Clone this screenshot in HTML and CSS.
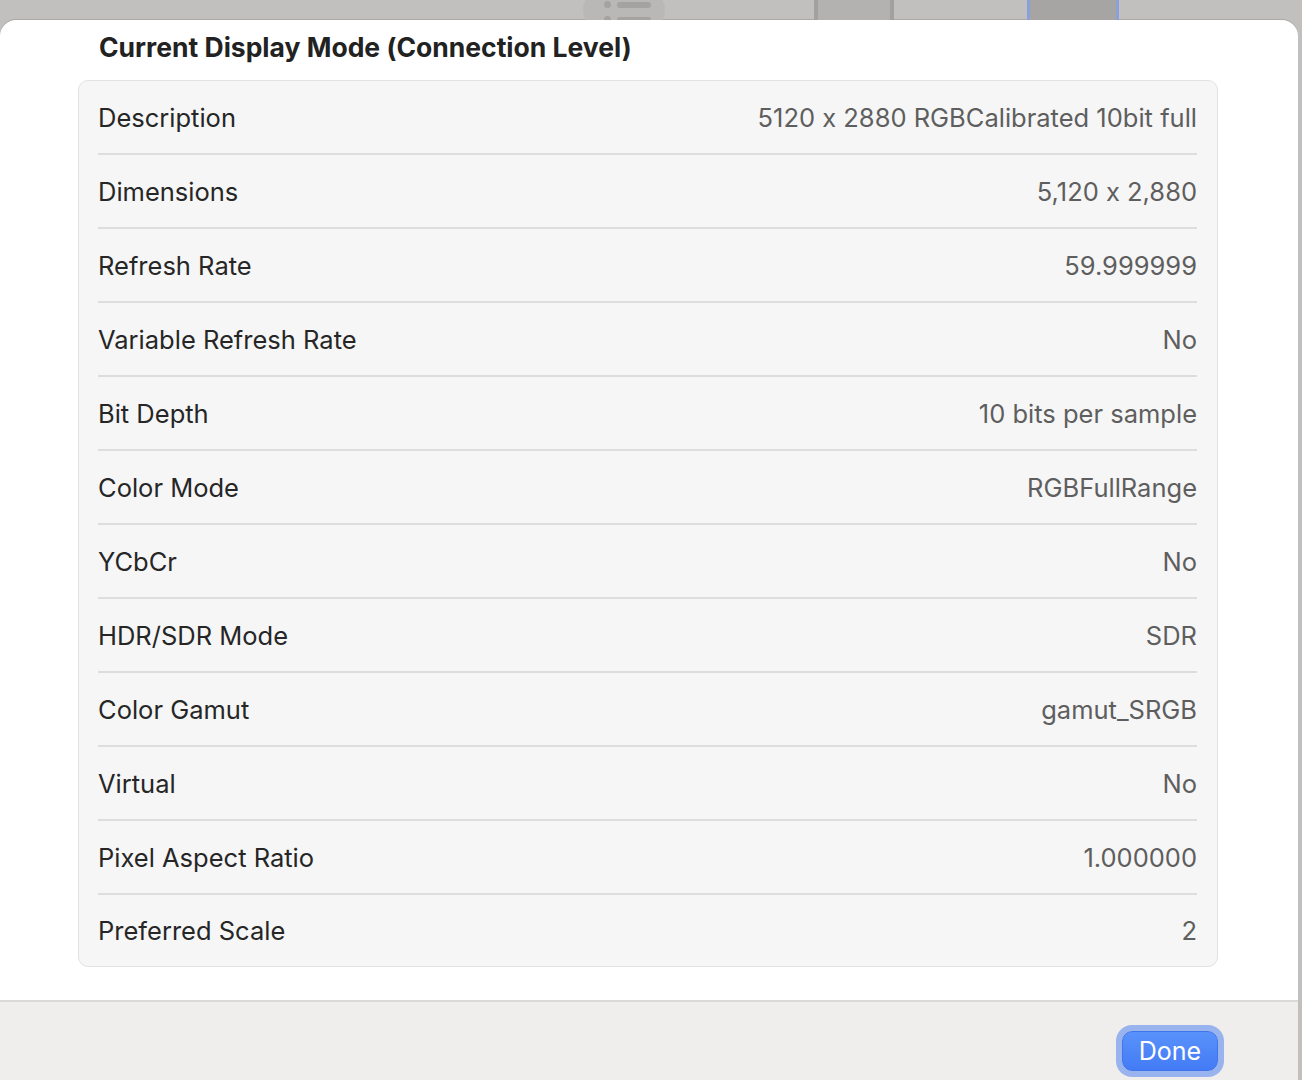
FILE: index.html
```html
<html>
    <head>
        <link rel="stylesheet" href="styles.css">
    </head>
    <body>
        <div class="backdrop">
            <div class="tool tool-list">
                <div class="line"><span class="dot"></span><span class="bar"></span></div>
                <div class="line"><span class="dot"></span><span class="bar"></span></div>
            </div>
            <div class="tool tool-box"></div>
            <div class="tool tool-sel"></div>
        </div>

        <div class="sheet">
            <div class="content">
                <h1 class="title">Current Display Mode (Connection Level)</h1>
                <div class="group">
                    <div class="row"><span class="label">Description</span><span class="value">5120 x 2880 RGBCalibrated 10bit full</span></div>
                    <div class="row"><span class="label">Dimensions</span><span class="value">5,120 x 2,880</span></div>
                    <div class="row"><span class="label">Refresh Rate</span><span class="value">59.999999</span></div>
                    <div class="row"><span class="label">Variable Refresh Rate</span><span class="value">No</span></div>
                    <div class="row"><span class="label">Bit Depth</span><span class="value">10 bits per sample</span></div>
                    <div class="row"><span class="label">Color Mode</span><span class="value">RGBFullRange</span></div>
                    <div class="row"><span class="label">YCbCr</span><span class="value">No</span></div>
                    <div class="row"><span class="label">HDR/SDR Mode</span><span class="value">SDR</span></div>
                    <div class="row"><span class="label">Color Gamut</span><span class="value">gamut_SRGB</span></div>
                    <div class="row"><span class="label">Virtual</span><span class="value">No</span></div>
                    <div class="row"><span class="label">Pixel Aspect Ratio</span><span class="value">1.000000</span></div>
                    <div class="row"><span class="label">Preferred Scale</span><span class="value">2</span></div>
                </div>
            </div>
            <div class="footer">
                <button class="done">Done</button>
            </div>
        </div>
    </body>
</html>
```

FILE: styles.css
```css
body {
    margin: 0;
    height: 1080px;
    overflow: hidden;
    background: #c1c0be;
    font-family: "Inter", "Noto Sans", sans-serif;
    font-feature-settings: "calt" 0;
}

.backdrop {
    height: 20px;
    display: flex;
    align-items: flex-end;
    overflow: hidden;
}
.tool-list {
    width: 82px;
    height: 60px;
    margin-left: 583px;
    border-radius: 50%;
    background: #b9b8b6;
    align-self: flex-start;
    margin-top: -20px;
    box-sizing: border-box;
    padding: 21px 0 0 21px;
    display: flex;
    flex-direction: column;
    gap: 8px;
}
.line {
    display: flex;
    align-items: center;
    gap: 6px;
}
.dot {
    width: 7px;
    height: 7px;
    border-radius: 50%;
    background: #a4a3a1;
}
.bar {
    width: 34px;
    height: 6px;
    border-radius: 3px;
    background: #a4a3a1;
}
.tool-box {
    width: 72px;
    height: 20px;
    margin-left: 149px;
    background: #b3b2b0;
    border-left: 4px solid #a2a1a0;
    border-right: 4px solid #a2a1a0;
}
.tool-sel {
    width: 86px;
    height: 20px;
    margin-left: 133px;
    background: #a6a5a4;
    border-left: 3px solid #8aa0d8;
    border-right: 3px solid #8aa0d8;
}

.sheet {
    width: 1298px;
    height: 1060px;
    background: #ffffff;
    border-radius: 16px 16px 0 0;
    display: flex;
    flex-direction: column;
    box-shadow: 0 -1px 0 #a9a8a6;
}
.content {
    flex: 1;
}
.title {
    margin: 0;
    padding: 11px 0 0 99px;
    height: 60px;
    box-sizing: border-box;
    font-size: 26.5px;
    line-height: 32px;
    font-weight: 700;
    color: #222222;
}
.group {
    margin-left: 78px;
    width: 1140px;
    box-sizing: border-box;
    border: 1.5px solid #e2e2e2;
    border-radius: 10px;
    background: #f6f6f6;
    padding: 0 20px 0 19px;
}
.row {
    height: 72px;
    display: flex;
    align-items: center;
    justify-content: space-between;
    border-bottom: 2px solid #dddddd;
    font-size: 25.5px;
    padding-top: 0;
}
.row:last-child {
    border-bottom: none;
    height: 71px;
}
.label {
    color: #262626;
}
.value {
    color: #5e5e5e;
}

.footer {
    height: 80px;
    box-sizing: border-box;
    border-top: 2px solid #d9d9d8;
    background: #efeeec;
    display: flex;
    justify-content: flex-end;
    align-items: flex-start;
    padding: 29px 80px 0 0;
}
.done {
    width: 96px;
    height: 40px;
    border: 1px solid #3f74ea;
    border-radius: 10px;
    background: linear-gradient(#5a92fb, #437bf5);
    color: #ffffff;
    font-family: "Inter", "Noto Sans", sans-serif;
    font-size: 25px;
    box-shadow: 0 0 0 6px #98b3ee;
}
```
